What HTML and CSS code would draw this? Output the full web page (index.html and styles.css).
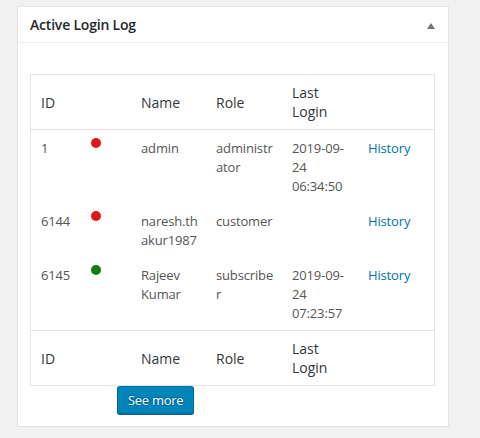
FILE: index.html
```html
<!DOCTYPE html>
<html lang="en">
<head>
<meta charset="utf-8">
<title>Active Login Log</title>
<link rel="stylesheet" href="styles.css">
</head>
<body>
<div class="page">
  <div class="postbox">
    <div class="postbox-header">
      <h2 class="hndle">Active Login Log</h2>
      <span class="toggle-indicator" aria-hidden="true"></span>
    </div>
    <div class="inside">
      <table class="log">
        <colgroup>
          <col class="c-id"><col class="c-dot"><col class="c-name"><col class="c-role"><col class="c-last"><col class="c-hist">
        </colgroup>
        <thead>
          <tr><th>ID</th><th></th><th>Name</th><th>Role</th><th>Last<br>Login</th><th></th></tr>
        </thead>
        <tbody>
          <tr>
            <td>1</td>
            <td><span class="dot dot-off"></span></td>
            <td>admin</td>
            <td>administr<br>ator</td>
            <td>2019-09-<br>24<br>06:34:50</td>
            <td><a href="#" class="link">History</a></td>
          </tr>
          <tr>
            <td>6144</td>
            <td><span class="dot dot-off"></span></td>
            <td>naresh.th<br>akur1987</td>
            <td>customer</td>
            <td></td>
            <td><a href="#" class="link">History</a></td>
          </tr>
          <tr>
            <td>6145</td>
            <td><span class="dot dot-on"></span></td>
            <td>Rajeev<br>Kumar</td>
            <td>subscribe<br>r</td>
            <td>2019-09-<br>24<br>07:23:57</td>
            <td><a href="#" class="link">History</a></td>
          </tr>
        </tbody>
        <tfoot>
          <tr><th>ID</th><th></th><th>Name</th><th>Role</th><th>Last<br>Login</th><th></th></tr>
        </tfoot>
      </table>
      <div class="actions">
        <a href="#" class="button">See more</a>
      </div>
    </div>
  </div>
</div>
</body>
</html>
```

FILE: styles.css
```css
html, body {
  margin: 0;
  padding: 0;
  background: #f1f1f1;
}

body {
  font-family: "Open Sans", "Noto Sans", "Liberation Sans", sans-serif;
  font-size: 13px;
  color: #444;
}

.page {
  padding: 6px 0 0 17px;
}

.postbox {
  box-sizing: border-box;
  width: 432px;
  background: #fff;
  border: 1px solid #e5e5e5;
  box-shadow: 0 1px 1px rgba(0, 0, 0, 0.04);
}

.postbox-header {
  display: flex;
  align-items: center;
  justify-content: space-between;
  border-bottom: 1px solid #eee;
  padding-right: 13px;
}

.hndle {
  margin: 0;
  padding: 8px 12px;
  font-size: 14px;
  line-height: 19px;
  font-weight: 600;
  letter-spacing: -0.2px;
  color: #23282d;
}

.toggle-indicator {
  width: 0;
  height: 0;
  margin-top: 3px;
  border-left: 4px solid transparent;
  border-right: 4px solid transparent;
  border-bottom: 6px solid #72777c;
}

.inside {
  padding: 31px 13px 12px 12px;
}

.log {
  width: 405px;
  table-layout: fixed;
  border-collapse: separate;
  border-spacing: 0;
  border: 1px solid #e5e5e5;
}

.c-id { width: 50px; }
.c-dot { width: 50px; }
.c-name { width: 75px; }
.c-role { width: 76px; }
.c-last { width: 76px; }
.c-hist { width: 76px; }

.log th,
.log td {
  padding: 8px 10px;
  text-align: left;
  white-space: nowrap;
}

.log th {
  font-size: 14px;
  line-height: 19px;
  font-weight: 400;
  color: #32373c;
  vertical-align: middle;
}

.log td {
  padding-top: 9px;
  padding-bottom: 7px;
  font-size: 13px;
  line-height: 19px;
  letter-spacing: -0.15px;
  color: #555;
  vertical-align: top;
}

.log thead th {
  border-bottom: 1px solid #e1e1e1;
}

.log tfoot th {
  border-top: 1px solid #e1e1e1;
}

.dot {
  display: block;
  width: 10px;
  height: 10px;
  margin-top: -1px;
  border-radius: 50%;
}

.dot-off { background: #e3131b; }
.dot-on { background: #0c7f0f; }

.link {
  color: #0073aa;
  text-decoration: none;
}

.actions {
  display: flex;
  padding-left: 87px;
}

.button {
  box-sizing: border-box;
  display: inline-block;
  height: 28px;
  padding: 0 10px 1px;
  font-size: 13px;
  line-height: 26px;
  letter-spacing: -0.3px;
  color: #fff;
  text-decoration: none;
  background: #0085ba;
  border: 1px solid;
  border-color: #0073aa #006799 #006799;
  border-radius: 3px;
  box-shadow: 0 1px 0 #006799;
  text-shadow: 0 -1px 1px #006799, 1px 0 1px #006799, 0 1px 1px #006799, -1px 0 1px #006799;
}
```
